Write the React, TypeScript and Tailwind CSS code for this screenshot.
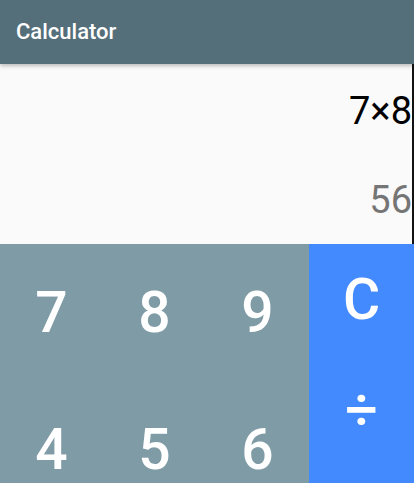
import React from "react";

export default function App() {
  const digits = ["7", "8", "9", "4", "5", "6", "1", "2", "3", ".", "0", "="];
  const ops = ["C", "÷", "×", "−", "+"];
  return (
    <div
      className="w-[414px] h-[483px] overflow-hidden flex flex-col bg-[#fafafa]"
      style={{ fontFamily: "Roboto, 'Liberation Sans', sans-serif" }}
    >
      <div className="relative z-10 h-16 shrink-0 bg-[#546e7a] flex items-center px-4 shadow-[0_2px_4px_rgba(0,0,0,0.25)]">
        <span className="text-white text-[22px] font-medium leading-none">Calculator</span>
      </div>
      <div className="h-[180px] shrink-0 flex flex-row bg-[#fafafa]">
        <div className="flex-1 flex flex-col items-end pt-[28px] overflow-hidden">
          <div className="text-[38px] leading-none text-black whitespace-nowrap">7×8</div>
          <div className="mt-[51px] text-[38px] leading-none text-[#757575] whitespace-nowrap">56</div>
        </div>
        <div className="w-[2px] bg-[#111]" />
      </div>
      <div className="flex flex-row flex-1">
        <div className="w-[309px] grid grid-cols-3 bg-[#7f9ba6] content-start">
          {digits.map((d) => (
            <div key={d} className="h-[137px] flex items-center justify-center text-white text-[57px] font-medium leading-none">
              {d}
            </div>
          ))}
        </div>
        <div className="flex-1 flex flex-col bg-[#448aff]">
          {ops.map((o) => (
            <div key={o} className="h-[110px] shrink-0 flex items-center justify-center text-white text-[57px] font-medium leading-none">
              {o}
            </div>
          ))}
        </div>
      </div>
    </div>
  );
}
